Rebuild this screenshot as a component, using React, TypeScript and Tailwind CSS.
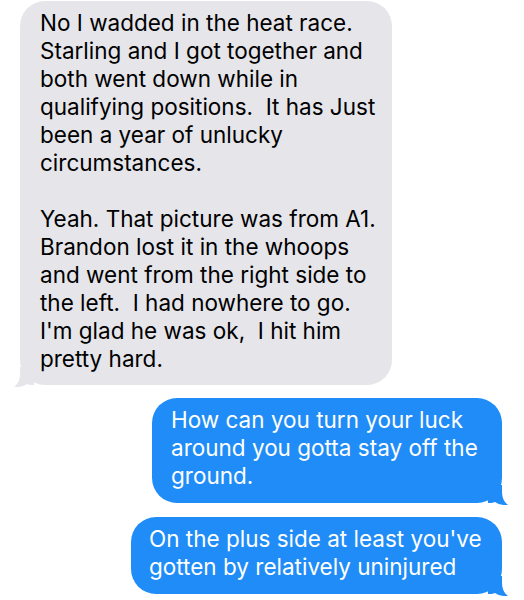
import { ReactNode } from "react";

const Tail = ({ color, side }: { color: string; side: "left" | "right" }) => (
  <svg
    width="20"
    height="20"
    viewBox="0 0 20 20"
    className={
      side === "right"
        ? "absolute -right-[6px] -bottom-[2px]"
        : "absolute -left-[6px] -bottom-[2px] -scale-x-100"
    }
  >
    <path
      d="M0 0 H14 V6 C14 13 16 17 20 20 C14 20.5 10 19 7 17 C5 18 2 18 0 18 Z"
      fill={color}
    />
  </svg>
);

const Lines = ({ lines }: { lines: string[] }) => (
  <>
    {lines.map((l, i) => (
      <div key={i} className="whitespace-pre h-[28px]">
        {l}
      </div>
    ))}
  </>
);

const Bubble = ({
  mine,
  className,
  children,
}: {
  mine?: boolean;
  className: string;
  children: ReactNode;
}) => (
  <div
    className={`relative rounded-[25px] ${
      mine ? "bg-[#1f8cf7] text-white self-end" : "bg-[#e5e5ea] text-black self-start"
    } ${className}`}
  >
    {children}
    <Tail color={mine ? "#1f8cf7" : "#e5e5ea"} side={mine ? "right" : "left"} />
  </div>
);

export default function App() {
  return (
    <div
      className="w-[524px] h-[600px] bg-white flex flex-col overflow-hidden text-[22.5px] leading-[28px]"
      style={{ fontFamily: "Inter, 'Liberation Sans', sans-serif" }}
    >
      <Bubble className="ml-[20px] mt-[1px] w-[372px] pl-[20px] pt-[8px] pb-[12px]">
        <Lines
          lines={[
            "No I wadded in the heat race.",
            "Starling and I got together and",
            "both went down while in",
            "qualifying positions.  It has Just",
            "been a year of unlucky",
            "circumstances.",
            "",
            "Yeah. That picture was from A1.",
            "Brandon lost it in the whoops",
            "and went from the right side to",
            "the left.  I had nowhere to go.",
            "I'm glad he was ok,  I hit him",
            "pretty hard.",
          ]}
        />
      </Bubble>
      <Bubble mine className="mr-[22px] mt-[13px] w-[350px] pl-[19px] pt-[8px] pb-[13px]">
        <Lines
          lines={[
            "How can you turn your luck",
            "around you gotta stay off the",
            "ground.",
          ]}
        />
      </Bubble>
      <Bubble mine className="mr-[22px] mt-[14px] w-[371px] pl-[18px] pt-[8px] pb-[13px]">
        <Lines lines={["On the plus side at least you've", "gotten by relatively uninjured"]} />
      </Bubble>
    </div>
  );
}
